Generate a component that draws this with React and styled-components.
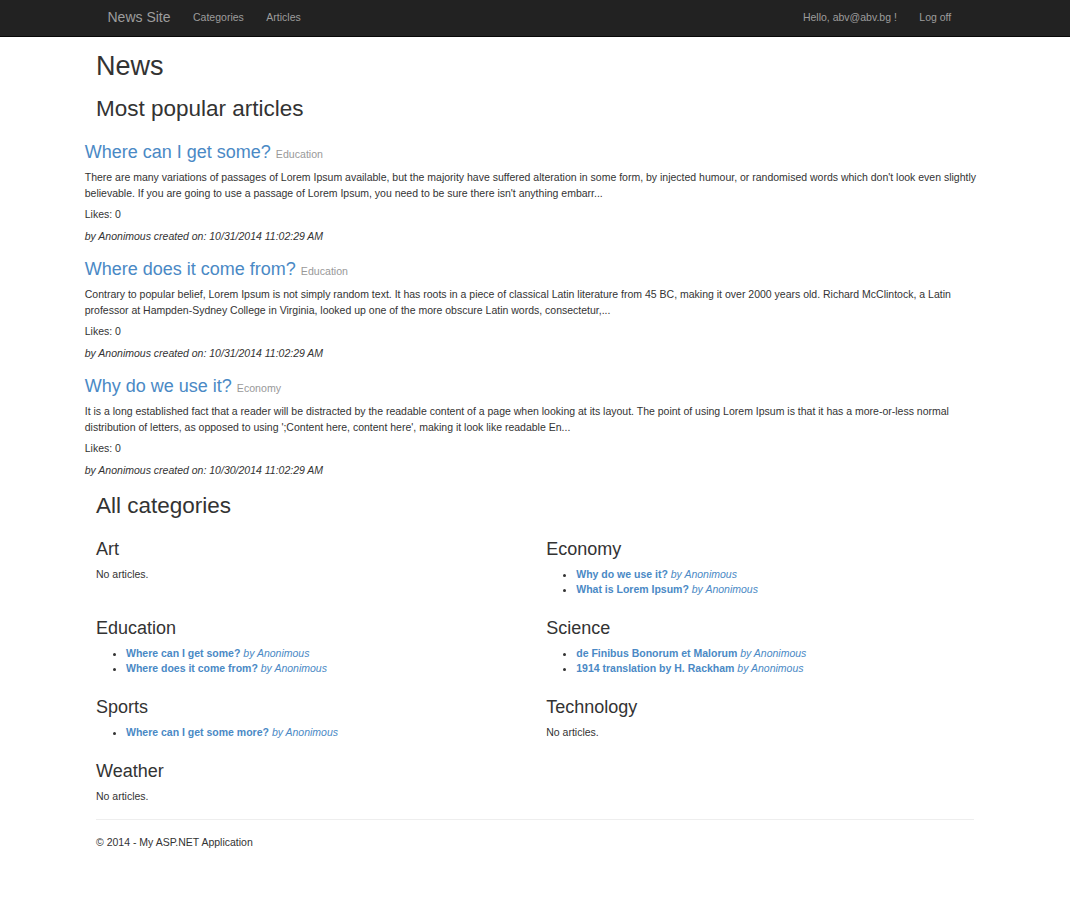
import React from "react";
import styled, { createGlobalStyle } from "styled-components";

const GlobalStyle = createGlobalStyle`
    html, body {
        margin: 0;
        padding: 0;
        background: #fff;
    }
    body {
        font-family: "Liberation Sans", Arial, Helvetica, sans-serif;
        font-size: 10.5px;
        line-height: 15px;
        color: #333;
    }
`;

const linkColor = "#4a89c5";

const popular = [
    {
        title: "Where can I get some?",
        category: "Education",
        text: "There are many variations of passages of Lorem Ipsum available, but the majority have suffered alteration in some form, by injected humour, or randomised words which don't look even slightly believable. If you are going to use a passage of Lorem Ipsum, you need to be sure there isn't anything embarr...",
        likes: 0,
        created: "10/31/2014 11:02:29 AM"
    },
    {
        title: "Where does it come from?",
        category: "Education",
        text: "Contrary to popular belief, Lorem Ipsum is not simply random text. It has roots in a piece of classical Latin literature from 45 BC, making it over 2000 years old. Richard McClintock, a Latin professor at Hampden-Sydney College in Virginia, looked up one of the more obscure Latin words, consectetur,...",
        likes: 0,
        created: "10/31/2014 11:02:29 AM"
    },
    {
        title: "Why do we use it?",
        category: "Economy",
        text: "It is a long established fact that a reader will be distracted by the readable content of a page when looking at its layout. The point of using Lorem Ipsum is that it has a more-or-less normal distribution of letters, as opposed to using ';Content here, content here', making it look like readable En...",
        likes: 0,
        created: "10/30/2014 11:02:29 AM"
    }
];

const categories = [
    { name: "Art", articles: [] },
    { name: "Economy", articles: ["Why do we use it?", "What is Lorem Ipsum?"] },
    { name: "Education", articles: ["Where can I get some?", "Where does it come from?"] },
    { name: "Science", articles: ["de Finibus Bonorum et Malorum", "1914 translation by H. Rackham"] },
    { name: "Sports", articles: ["Where can I get some more?"] },
    { name: "Technology", articles: [] },
    { name: "Weather", articles: [] }
];

const Navbar = styled.nav`
    height: 36px;
    background: #222;
    border-bottom: 1px solid #080808;
`;

const NavContainer = styled.div`
    width: 855px;
    margin: 0 auto;
    display: flex;
    align-items: center;
    height: 100%;
    padding-bottom: 2px;
    box-sizing: border-box;
`;

const Brand = styled.a`
    margin-left: -11.25px;
    padding: 0 11.25px;
    font-size: 14px;
    color: #9d9d9d;
    text-decoration: none;
`;

const NavLink = styled.a`
    padding: 0 11.25px;
    font-size: 10.5px;
    color: #9d9d9d;
    text-decoration: none;
    ${(p) => p.$pushRight && "margin-left: auto;"}
`;

const Container = styled.main`
    width: 878px;
    margin: 0 auto;
`;

const PageTitle = styled.h1`
    margin: 14px 0 0;
    font-size: 27px;
    line-height: 30px;
    font-weight: 500;
`;

const SectionTitle = styled.h2`
    margin: ${(p) => p.$top}px 0 0;
    font-size: 22.5px;
    line-height: 25px;
    font-weight: 500;
`;

const ArticleList = styled.div`
    margin: 21.5px -11.25px 0;
    display: flex;
    flex-direction: column;
    gap: 15px;
`;

const Article = styled.article``;

const ArticleTitle = styled.h3`
    margin: 0 0 7px;
    font-size: 18px;
    line-height: 20px;
    font-weight: 500;
    color: ${linkColor};

    small {
        font-size: 10.6px;
        line-height: 1;
        color: #999;
        font-weight: 400;
    }
`;

const Summary = styled.p`
    margin: 0 0 6px;
    line-height: 16px;
`;

const Para = styled.p`
    margin: 0 0 ${(p) => p.$bottom ?? 7}px;
    font-style: ${(p) => (p.$italic ? "italic" : "normal")};
`;

const CategoryGrid = styled.div`
    margin-top: 21px;
    display: grid;
    grid-template-columns: 1fr 1fr;
    column-gap: 22.5px;
    row-gap: 21px;
`;

const CategoryName = styled.h3`
    margin: 0 0 8px;
    font-size: 18px;
    line-height: 20px;
    font-weight: 500;
`;

const Empty = styled.p`
    margin: 0;
`;

const List = styled.ul`
    margin: 0;
    padding-left: 30px;
`;

const Item = styled.li`
    line-height: 15px;

    a {
        color: ${linkColor};
        text-decoration: none;
    }
    strong {
        font-weight: 700;
    }
`;

const Rule = styled.hr`
    margin: 15.5px 0 15px;
    border: 0;
    border-top: 1px solid #eee;
`;

const Footer = styled.footer`
    p {
        margin: 0 0 30px;
    }
`;

export default function App() {
    return (
        <>
            <GlobalStyle />
            <Navbar>
                <NavContainer>
                    <Brand href="#">News Site</Brand>
                    <NavLink href="#">Categories</NavLink>
                    <NavLink href="#">Articles</NavLink>
                    <NavLink href="#" $pushRight>
                        Hello, abv@abv.bg !
                    </NavLink>
                    <NavLink href="#">Log off</NavLink>
                </NavContainer>
            </Navbar>
            <Container>
                <PageTitle>News</PageTitle>
                <SectionTitle $top={14.5}>Most popular articles</SectionTitle>
                <ArticleList>
                    {popular.map((a, i) => (
                        <Article key={i}>
                            <ArticleTitle>
                                {a.title} <small>{a.category}</small>
                            </ArticleTitle>
                            <Summary>{a.text}</Summary>
                            <Para>Likes: {a.likes}</Para>
                            <Para $italic $bottom={0}>
                                by Anonimous created on: {a.created}
                            </Para>
                        </Article>
                    ))}
                </ArticleList>
                <SectionTitle $top={14.5}>All categories</SectionTitle>
                <CategoryGrid>
                    {categories.map((c) => (
                        <div key={c.name}>
                            <CategoryName>{c.name}</CategoryName>
                            {c.articles.length === 0 ? (
                                <Empty>No articles.</Empty>
                            ) : (
                                <List>
                                    {c.articles.map((t) => (
                                        <Item key={t}>
                                            <a href="#">
                                                <strong>{t}</strong> <em>by Anonimous</em>
                                            </a>
                                        </Item>
                                    ))}
                                </List>
                            )}
                        </div>
                    ))}
                </CategoryGrid>
                <Rule />
                <Footer>
                    <p>&copy; 2014 - My ASP.NET Application</p>
                </Footer>
            </Container>
        </>
    );
}
